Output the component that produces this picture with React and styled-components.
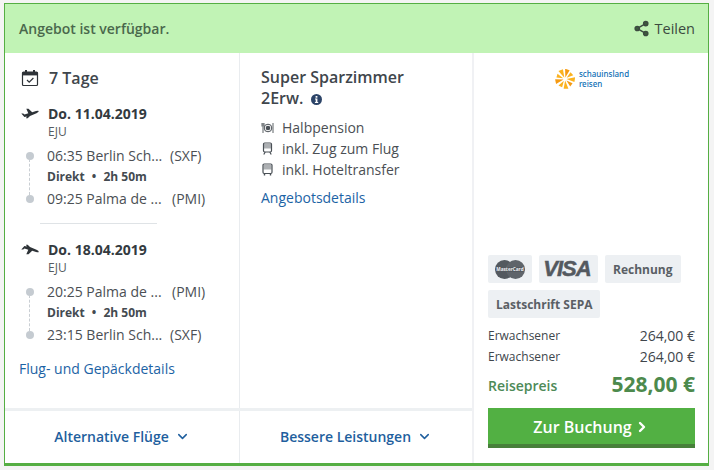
import styled, { createGlobalStyle } from "styled-components"
import { Share2, ChevronDown, ChevronRight } from "lucide-react"

const GlobalStyle = createGlobalStyle`
  html, body {
    margin: 0;
    padding: 0;
    background: #f4f4f4;
    font-family: "Open Sans", sans-serif;
    color: #333a40;
  }
  * { box-sizing: border-box; }
`

function CalendarIcon() {
  return (
    <svg width="18" height="18" viewBox="0 0 18 18" fill="none">
      <rect x="1.5" y="3" width="15" height="13.5" rx="1" stroke="#2e3338" strokeWidth="1.2" />
      <rect x="1.5" y="3" width="15" height="3.4" fill="#2e3338" />
      <rect x="4" y="1" width="2" height="3.5" fill="#2e3338" />
      <rect x="12" y="1" width="2" height="3.5" fill="#2e3338" />
      <path d="M6 11l2.2 2.2L12.4 9" stroke="#2e3338" strokeWidth="1.2" />
    </svg>
  )
}

function PlaneIcon({ landing }) {
  return (
    <svg width="18" height="11" viewBox="0 0 18 11" style={landing ? { transform: "scaleY(-1)" } : undefined}>
      <path
        d="M0.3 5.6 L2.2 5.4 L3.5 6.4 L7.3 5.3 L5.3 0.8 L7.5 0.8 L11.2 4.3 L15 3 Q17.6 2.3 17.8 3.1 Q17.8 4.2 15.5 5.3 L9 7.9 L6.7 10.2 L5 10.2 L5.8 8.4 L3.4 9 Z"
        fill="#2e3338"
      />
    </svg>
  )
}

function MealIcon() {
  return (
    <svg width="13" height="12" viewBox="0 0 13 12">
      <circle cx="7" cy="6" r="3.8" fill="none" stroke="#4a5056" strokeWidth="1" />
      <circle cx="7" cy="6" r="2.3" fill="#4a5056" />
      <path d="M1 1v3.5M2 1v10M3 1v3.5M12 1v10" stroke="#4a5056" strokeWidth="0.9" fill="none" />
    </svg>
  )
}

function TrainIcon() {
  return (
    <svg width="13" height="13" viewBox="0 0 13 13" fill="none" stroke="#4a5056">
      <rect x="2.5" y="1" width="8" height="9" rx="1.2" strokeWidth="1.2" />
      <rect x="3" y="2" width="7" height="4.5" fill="#4a5056" stroke="none" opacity="0.45" />
      <path d="M2.8 12.5l1.4-2.5M10.2 12.5l-1.4-2.5" strokeWidth="1.2" />
    </svg>
  )
}

function BusIcon() {
  return (
    <svg width="13" height="13" viewBox="0 0 13 13" fill="none" stroke="#4a5056">
      <rect x="2" y="1" width="9" height="9.5" rx="1.2" strokeWidth="1.2" />
      <rect x="2.5" y="2" width="8" height="4.5" fill="#4a5056" stroke="none" opacity="0.45" />
      <path d="M3.5 10.5v2M9.5 10.5v2" strokeWidth="1.4" />
    </svg>
  )
}

function InfoDot() {
  return (
    <svg width="11" height="11" viewBox="0 0 11 11">
      <circle cx="5.5" cy="5.5" r="5.5" fill="#2c4468" />
      <rect x="4.6" y="2" width="1.8" height="1.7" fill="#fff" />
      <path d="M4 4.6h2.4v3.3h0.8v1H3.9v-1h0.8V5.6H4z" fill="#fff" />
    </svg>
  )
}

function MasterCardIcon() {
  return (
    <svg width="30" height="19" viewBox="0 0 30 19">
      <circle cx="9.5" cy="9.5" r="9.5" fill="#54595f" />
      <circle cx="20.5" cy="9.5" r="9.5" fill="#5f646a" />
      <rect x="0.5" y="7" width="29" height="5" rx="2" fill="#54595f" />
      <text x="15" y="11.2" textAnchor="middle" fontFamily="Open Sans" fontSize="4.7" fontWeight="700" fill="#eef0f3">MasterCard</text>
    </svg>
  )
}

function SunLogo() {
  const rays = [0, 40, 80, 120, 160, 200, 240, 280, 320]
  return (
    <svg width="20" height="20" viewBox="0 0 20 20">
      {rays.map((r, i) => (
        <path
          key={r}
          d={i % 2 ? "M10 8 L7.8 1.6 L11.8 1 Z" : "M10 8.5 L7.6 0 L12.4 0.4 Z"}
          fill={i % 3 === 0 ? "#f59a12" : "#fbb21f"}
          transform={`rotate(${r + 14} 10 10)`}
        />
      ))}
    </svg>
  )
}

function Leg({ icon, date, from, to, fromCode, toCode, fromTime, toTime }) {
  return (
    <>
      <DateRow>
        <IconCell>{icon}</IconCell>
        <div>
          <DateText>{date}</DateText>
          <Carrier>EJU</Carrier>
        </div>
      </DateRow>
      <Stops>
        <Stop>
          <Dot />
          <StopName>{fromTime} {from}</StopName>
          <StopCode $gap={fromCode === "PMI" ? 2 : 0}>({fromCode})</StopCode>
        </Stop>
        <Duration>Direkt <Bullet>•</Bullet> 2h 50m</Duration>
        <Stop>
          <Dot />
          <StopName>{toTime} {to}</StopName>
          <StopCode $gap={toCode === "PMI" ? 2 : 0}>({toCode})</StopCode>
        </Stop>
      </Stops>
    </>
  )
}

export default function App() {
  return (
    <>
      <GlobalStyle />
      <Page>
        <Card>
          <Banner>
            <span>Angebot ist verfügbar.</span>
            <ShareLink>
              <Share2 size={17} fill="#3c5a3c" strokeWidth={2} />
              Teilen
            </ShareLink>
          </Banner>
          <Body>
            <LeftArea>
              <Columns>
                <FlightCol>
                  <DaysRow>
                    <IconCell><CalendarIcon /></IconCell>
                    <Days>7 Tage</Days>
                  </DaysRow>
                  <Leg
                    icon={<PlaneIcon />}
                    date="Do. 11.04.2019"
                    fromTime="06:35"
                    from="Berlin Sch..."
                    fromCode="SXF"
                    toTime="09:25"
                    to="Palma de ..."
                    toCode="PMI"
                  />
                  <Divider />
                  <Leg
                    icon={<PlaneIcon landing />}
                    date="Do. 18.04.2019"
                    fromTime="20:25"
                    from="Palma de ..."
                    fromCode="PMI"
                    toTime="23:15"
                    to="Berlin Sch..."
                    toCode="SXF"
                  />
                  <DetailsLink>Flug- und Gepäckdetails</DetailsLink>
                </FlightCol>
                <OfferCol>
                  <RoomTitle>
                    Super Sparzimmer<br />
                    2Erw.
                    <InfoDot />
                  </RoomTitle>
                  <Features>
                    <Feature><MealIcon />Halbpension</Feature>
                    <Feature><TrainIcon />inkl. Zug zum Flug</Feature>
                    <Feature><BusIcon />inkl. Hoteltransfer</Feature>
                  </Features>
                  <OfferLink>Angebotsdetails</OfferLink>
                </OfferCol>
              </Columns>
              <Footer>
                <FooterItem>Alternative Flüge <ChevronDown size={15} strokeWidth={2.4} /></FooterItem>
                <FooterItem>Bessere Leistungen <ChevronDown size={15} strokeWidth={2.4} /></FooterItem>
              </Footer>
            </LeftArea>
            <PriceCol>
              <Logo>
                <SunLogo />
                <LogoText>schauinsland<br />reisen</LogoText>
              </Logo>
              <Payments>
                <PayBadge $w={44}><MasterCardIcon /></PayBadge>
                <PayBadge $w={59}><VisaText>VISA</VisaText></PayBadge>
                <PayBadge>Rechnung</PayBadge>
                <PayBadge>Lastschrift SEPA</PayBadge>
              </Payments>
              <Prices>
                <PriceRow><span>Erwachsener</span><Amount>264,00 €</Amount></PriceRow>
                <PriceRow><span>Erwachsener</span><Amount>264,00 €</Amount></PriceRow>
              </Prices>
              <TotalRow>
                <TotalLabel>Reisepreis</TotalLabel>
                <TotalValue>528,00 €</TotalValue>
              </TotalRow>
              <BookButton>Zur Buchung <ChevronRight size={16} strokeWidth={3.6} /></BookButton>
            </PriceCol>
          </Body>
        </Card>
      </Page>
    </>
  )
}

const Page = styled.div`
  width: 714px;
  height: 470px;
  padding: 3px 5px 0 4px;
  overflow: hidden;
`

const Card = styled.div`
  width: 705px;
  height: 463px;
  background: #fff;
  border: 1px solid #55ae43;
  border-bottom-width: 3px;
  display: flex;
  flex-direction: column;
`

const Banner = styled.div`
  height: 49px;
  flex: none;
  background: #c1f3b5;
  color: #4a684c;
  font-size: 14px;
  font-weight: 600;
  padding: 0 13px 0 14px;
  display: flex;
  align-items: center;
  justify-content: space-between;
`

const ShareLink = styled.span`
  display: flex;
  align-items: center;
  gap: 5px;
  font-weight: 400;
  font-size: 14.5px;
  color: #3c4a40;
`

const Body = styled.div`
  flex: 1;
  display: flex;
  min-height: 0;
`

const LeftArea = styled.div`
  width: 469px;
  display: flex;
  flex-direction: column;
  border-right: 2px solid #f0f1f4;
`

const Columns = styled.div`
  height: 358px;
  flex: none;
  display: flex;
  border-bottom: 3px solid #edf0f2;
`

const FlightCol = styled.div`
  width: 235px;
  flex: none;
  padding: 15px 14px 0 14px;
  border-right: 1px solid #e9ecef;
`

const OfferCol = styled.div`
  flex: 1;
  padding: 14px 20px 0 21px;
`

const IconCell = styled.div`
  width: 29px;
  flex: none;
  display: flex;
  align-items: center;
  padding-left: 2px;
`

const DaysRow = styled.div`
  display: flex;
  align-items: center;
  height: 20px;
  margin-bottom: 16px;
`

const Days = styled.span`
  font-size: 16px;
  font-weight: 600;
  color: #40464c;
  margin-left: 1px;
`

const DateRow = styled.div`
  display: flex;
  align-items: flex-start;
  & > ${IconCell} {
    height: 19px;
  }
`

const DateText = styled.div`
  font-size: 14px;
  line-height: 19px;
  font-weight: 700;
  color: #333a40;
`

const Carrier = styled.div`
  font-size: 12px;
  line-height: 17px;
  color: #555b61;
`

const Stops = styled.div`
  margin-top: 5px;
  position: relative;
  &::before {
    content: "";
    position: absolute;
    left: 10px;
    top: 14px;
    bottom: 14px;
    border-left: 1px dashed #c9ced3;
  }
`

const Stop = styled.div`
  display: flex;
  align-items: center;
  height: 21px;
  font-size: 14px;
  color: #4b4f54;
`

const Dot = styled.span`
  width: 8px;
  height: 8px;
  border-radius: 50%;
  background: #c5cbd1;
  margin: 0 13px 0 7px;
  flex: none;
`

const StopName = styled.span`
  width: 123px;
  white-space: nowrap;
  flex: none;
`

const StopCode = styled.span`
  white-space: nowrap;
  margin-left: ${(p) => p.$gap}px;
`

const Duration = styled.div`
  height: 22px;
  line-height: 22px;
  padding-left: 28px;
  font-size: 12px;
  font-weight: 700;
  color: #444a50;
`

const Bullet = styled.span`
  margin: 0 4px;
`

const Divider = styled.div`
  height: 1px;
  width: 117px;
  margin: 14px 0 16px 21px;
  background: #dfe3e6;
`

const linkStyle = `
  font-size: 14px;
  color: #1c63a5;
`

const DetailsLink = styled.div`
  ${linkStyle}
  margin-top: 14px;
`

const RoomTitle = styled.div`
  font-size: 16px;
  line-height: 21px;
  font-weight: 600;
  color: #40464c;
  svg {
    margin-left: 8px;
    vertical-align: -1px;
  }
`

const Features = styled.div`
  margin-top: 8px;
`

const Feature = styled.div`
  display: flex;
  align-items: center;
  gap: 8px;
  height: 21px;
  font-size: 14px;
  color: #4b4f54;
  svg {
    flex: none;
  }
`

const OfferLink = styled.div`
  ${linkStyle}
  margin-top: 8px;
`

const Footer = styled.div`
  flex: 1;
  display: flex;
`

const FooterItem = styled.div`
  display: flex;
  align-items: center;
  justify-content: center;
  gap: 6px;
  padding-bottom: 2px;
  font-size: 14px;
  font-weight: 600;
  color: #1f5f9e;
  &:first-child {
    width: 235px;
    flex: none;
    border-right: 1px solid #e9ecef;
  }
  &:last-child {
    flex: 1;
  }
`

const PriceCol = styled.div`
  flex: 1;
  padding: 0 13px 0 14px;
  display: flex;
  flex-direction: column;
`

const Logo = styled.div`
  margin-top: 15px;
  height: 22px;
  display: flex;
  align-items: center;
  justify-content: center;
  gap: 4px;
  margin-left: 1px;
`

const LogoText = styled.div`
  font-family: "Noto Sans", sans-serif;
  font-size: 8px;
  line-height: 10px;
  font-weight: 500;
  color: #0f6fb5;
`

const Payments = styled.div`
  margin-top: 165px;
  display: flex;
  flex-wrap: wrap;
  gap: 7px;
`

const PayBadge = styled.div`
  height: 28px;
  ${(p) => (p.$w ? `width: ${p.$w}px;` : "padding: 0 8px;")}
  display: flex;
  align-items: center;
  justify-content: center;
  background: #edf0f3;
  border-radius: 2px;
  font-size: 12px;
  font-weight: 700;
  color: #5a5f65;
`

const VisaText = styled.span`
  font-family: "Liberation Sans", sans-serif;
  font-size: 22px;
  font-weight: 700;
  font-style: italic;
  letter-spacing: -1px;
  color: #54595f;
  -webkit-text-stroke: 0.5px #54595f;
  margin-right: 3px;
`

const Prices = styled.div`
  margin-top: 7px;
`

const PriceRow = styled.div`
  display: flex;
  justify-content: space-between;
  align-items: center;
  height: 21px;
  font-size: 12px;
  color: #40464c;
`

const Amount = styled.span`
  font-size: 14px;
`

const TotalRow = styled.div`
  display: flex;
  justify-content: space-between;
  align-items: center;
  height: 30px;
  margin-top: 2px;
`

const TotalLabel = styled.span`
  font-size: 14px;
  font-weight: 600;
  color: #4d8a57;
  margin-top: 3px;
`

const TotalValue = styled.span`
  font-size: 21px;
  font-weight: 700;
  color: #4d8a4d;
`

const BookButton = styled.div`
  margin-top: 9px;
  height: 40px;
  padding-top: 1px;
  background: #52b043;
  border-bottom: 4px solid #47803a;
  color: #fff;
  font-size: 16px;
  font-weight: 600;
  display: flex;
  align-items: center;
  justify-content: center;
  gap: 2px;
`
